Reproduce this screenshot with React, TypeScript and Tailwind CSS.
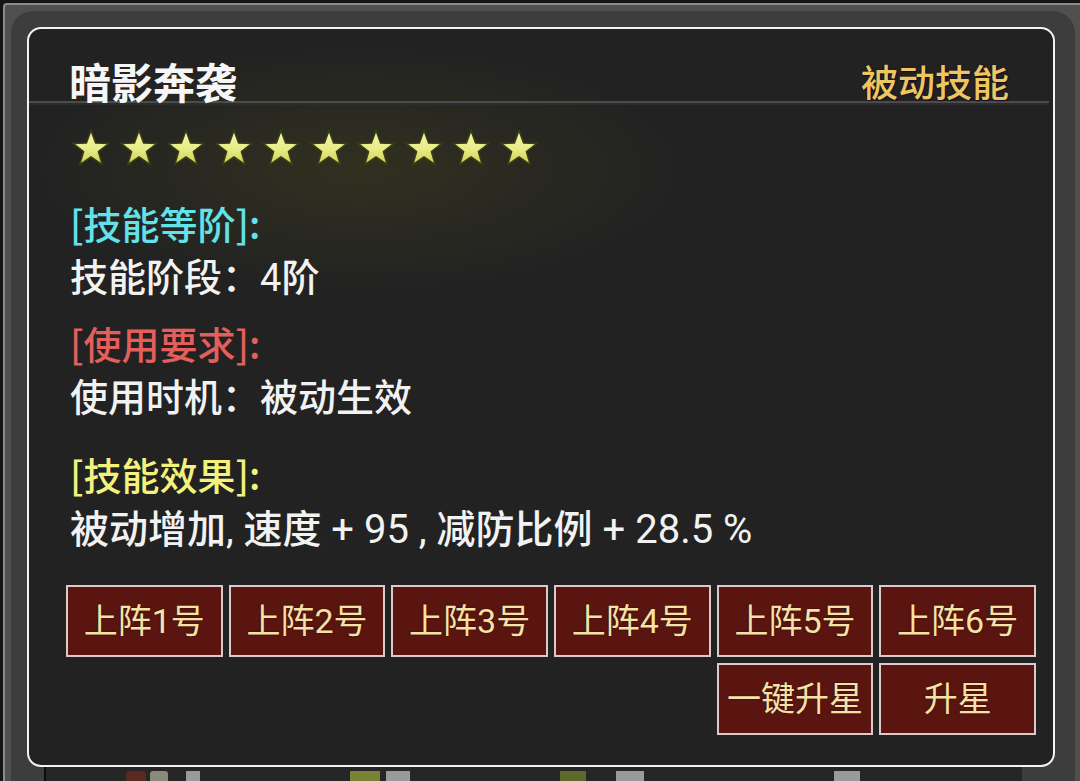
import React from "react";

const CJK = { fontFamily: '"Noto Sans CJK SC", "Noto Sans", sans-serif' };
const MIXED = { fontFamily: 'Roboto, "Noto Sans CJK SC", sans-serif' };

function Star() {
  return (
    <svg viewBox="0 0 40 38" className="w-[40px] h-[38px]">
      <defs>
        <linearGradient id="starFill" x1="0" y1="0" x2="0" y2="1">
          <stop offset="0" stopColor="#f4f6a8" />
          <stop offset="0.55" stopColor="#e8ec86" />
          <stop offset="1" stopColor="#c9cf52" />
        </linearGradient>
      </defs>
      <path
        d="M20 1.5 L24.6 14 L38 14.4 L27.4 22.6 L31.2 35.6 L20 28 L8.8 35.6 L12.6 22.6 L2 14.4 L15.4 14 Z"
        fill="url(#starFill)"
        stroke="#3b3d14"
        strokeWidth="1.6"
        strokeLinejoin="round"
      />
    </svg>
  );
}

function Btn({ label }: { label: string }) {
  return (
    <div
      className="h-[72px] flex items-center justify-center bg-[#5b1511] border-2 border-[#dccaca] text-[34px] leading-none text-[#f5e2a6] [text-shadow:0_0_2px_#2a0604]"
      style={MIXED}
    >
      {label}
    </div>
  );
}

const slots = ["上阵1号", "上阵2号", "上阵3号", "上阵4号", "上阵5号", "上阵6号"];

export default function App() {
  return (
    <div className="w-[1080px] h-[781px] overflow-hidden bg-[#151515] pt-[3px] pl-[3px]" style={CJK}>
      <div className="h-[800px] bg-[#505050] border-t-2 border-l-2 border-[#8c8c8c] rounded-tl-[4px] pt-[6px] pl-[6px]">
        <div className="h-[800px] w-[1064px] bg-[#3d3d3d] rounded-[22px] pt-[16px] pl-[16px]">
          <div className="w-[1028px] h-[740px] border-2 border-[#f2f2f2] rounded-[14px] bg-[#222222] bg-[radial-gradient(ellipse_320px_120px_at_330px_140px,rgba(70,70,30,0.4),transparent)] flex flex-col">
            <div className="h-[74px] flex items-end justify-between pl-[40px] pr-[40px] border-b-2 border-[#4c4c4c] shadow-[0_2px_0_#2c2c2c] mr-[4px]">
              <div className="text-[42px] leading-none font-bold text-[#f6f6f6] mb-[-1px]">暗影奔袭</div>
              <div className="text-[37px] leading-none font-medium text-[#eec660] mb-[1px] [text-shadow:0_0_2px_#1a1020,1px_1px_1px_#1a1020]">
                被动技能
              </div>
            </div>

            <div className="flex gap-[7.5px] pl-[42px] mt-[26px]">
              {Array.from({ length: 10 }).map((_, i) => (
                <Star key={i} />
              ))}
            </div>

            <div className="pl-[41px] text-[38px] leading-none font-medium">
              <div className="mt-[37px] text-[#64e2ea]">[技能等阶]:</div>
              <div className="mt-[17px] text-[#f2f2f2]" style={MIXED}>
                技能阶段：<span className="font-normal">4</span>阶
              </div>
              <div className="mt-[27px] text-[#e25f5c]">[使用要求]:</div>
              <div className="mt-[17px] text-[#f2f2f2]" style={MIXED}>使用时机：被动生效</div>
              <div className="mt-[38px] text-[#f2f27c]">[技能效果]:</div>
              <div className="mt-[17px] text-[#f2f2f2] text-[39px]" style={MIXED}>
                被动增加<span className="font-normal">, </span>速度
                <span className="font-normal text-[40px]"> + 95 , </span>减防比例
                <span className="font-normal text-[40px]"> + 28.5 %</span>
              </div>
            </div>

            <div className="ml-[37px] w-[970px] mt-[35px] grid grid-cols-6 gap-[6px]">
              {slots.map((s) => (
                <Btn key={s} label={s} />
              ))}
              <div className="col-start-5">
                <Btn label="一键升星" />
              </div>
              <Btn label="升星" />
            </div>
          </div>

          <div className="ml-[17px] w-[978px] h-[20px] bg-[#262626] border-l-2 border-[#0c0c0c] flex items-start pt-[4px]">
            <div className="ml-[80px] w-[20px] h-[10px] bg-[#5a2a22] rounded-t-[4px]" />
            <div className="ml-[4px] w-[18px] h-[10px] bg-[#8a8a7a] rounded-t-[3px]" />
            <div className="ml-[18px] w-[14px] h-[10px] bg-[#9a9a9a]" />
            <div className="ml-[150px] w-[30px] h-[10px] bg-[#7a8236]" />
            <div className="ml-[6px] w-[24px] h-[10px] bg-[#9a9a9a]" />
            <div className="ml-[150px] w-[26px] h-[10px] bg-[#5e6a2c]" />
            <div className="ml-[30px] w-[28px] h-[10px] bg-[#9a9a9a]" />
            <div className="ml-[190px] w-[26px] h-[10px] bg-[#9a9a9a]" />
          </div>
        </div>
      </div>
    </div>
  );
}
